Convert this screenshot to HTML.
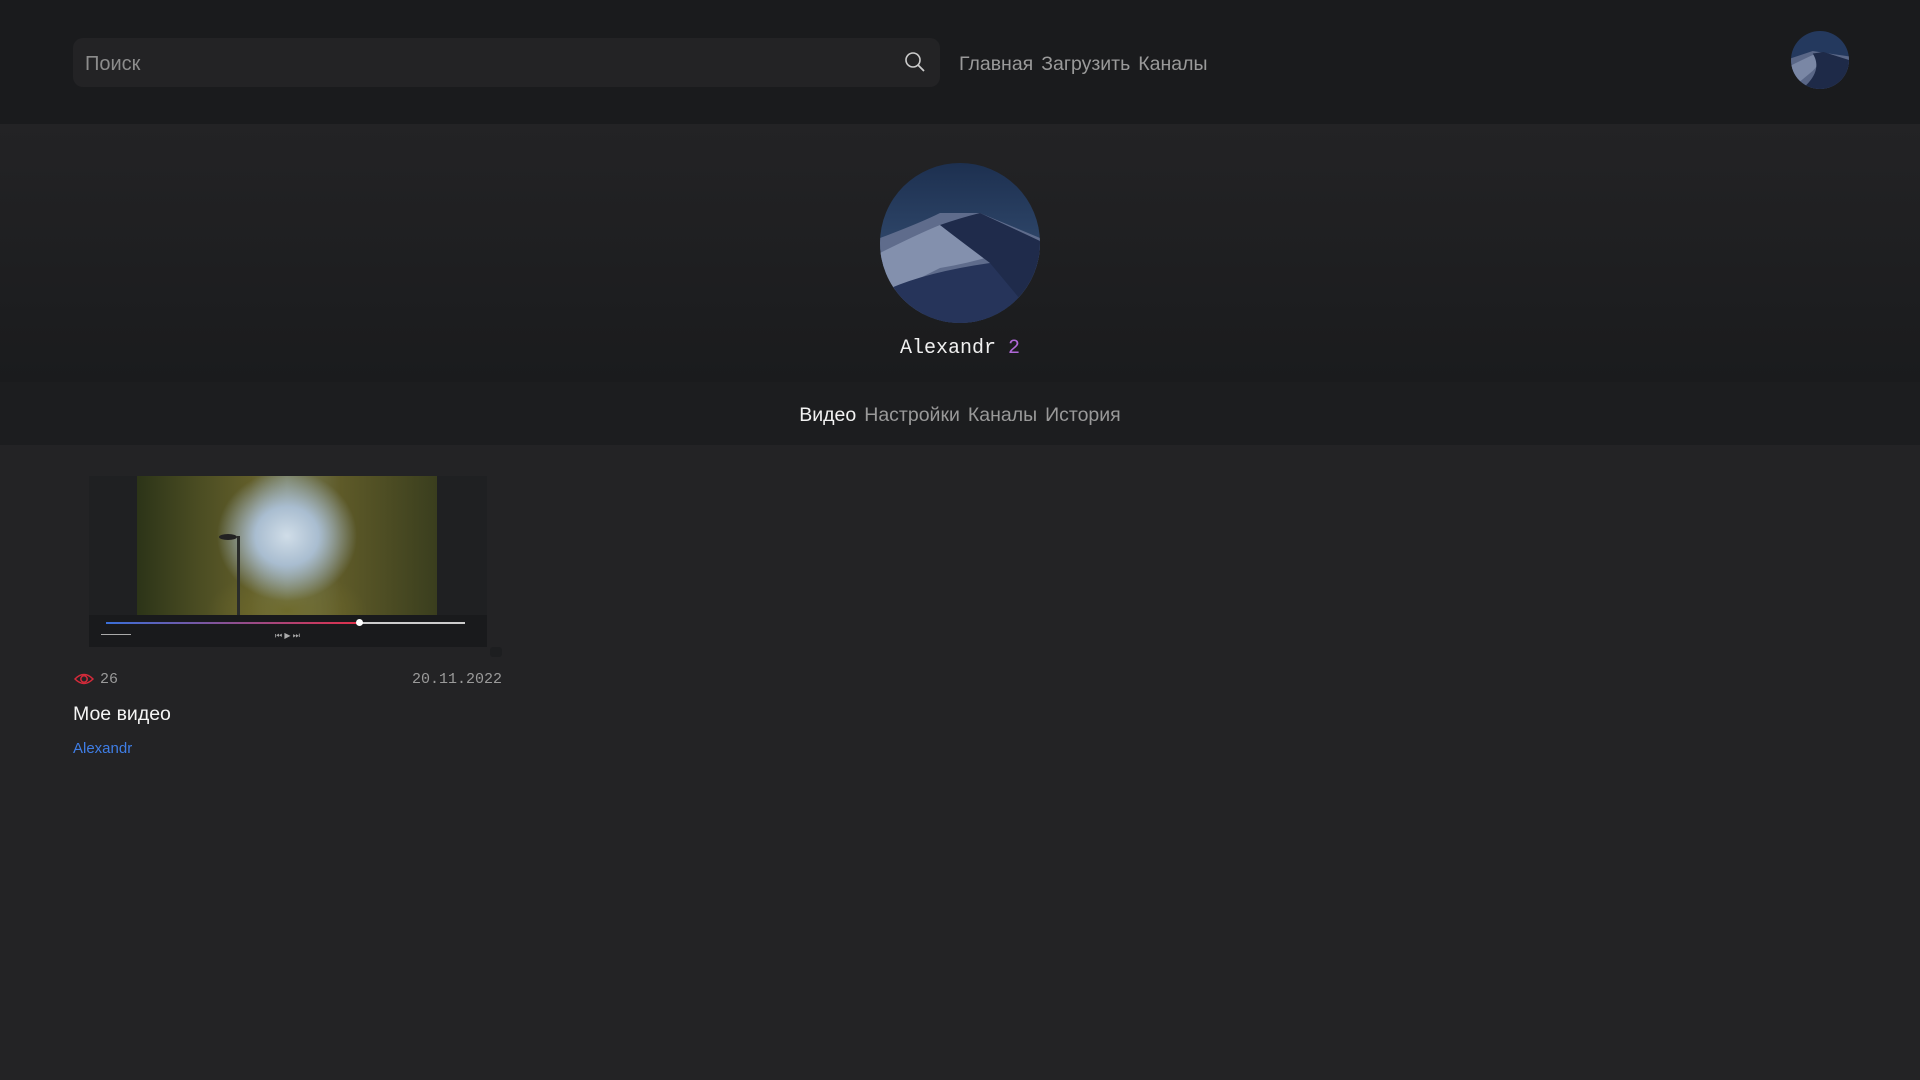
<!DOCTYPE html>
<html><head><meta charset="utf-8"><style>
*{margin:0;padding:0;box-sizing:border-box}
body{width:1920px;height:1080px;background:#232325;font-family:"Liberation Sans","DejaVu Sans",sans-serif;overflow:hidden;position:relative}
.hdr{position:absolute;left:0;top:0;width:1920px;height:124px;background:#1a1b1d}
.search{position:absolute;left:73px;top:38px;width:867px;height:49px;background:#232325;border-radius:10px}
.search span{position:absolute;left:12px;top:15px;font-size:20px;color:#8c8c8c}
.search svg{position:absolute;right:14px;top:13px}
.nav{position:absolute;left:959px;top:53px;font-size:19.5px;color:#9a9a9a}
.nav span{margin-right:8px}
.av{position:absolute;border-radius:50%;overflow:hidden}
.prof{position:absolute;left:0;top:124px;width:1920px;height:258px;background:linear-gradient(#232325,#1a1b1d)}
.name{position:absolute;left:0;width:1920px;top:337px;text-align:center;font-family:"Liberation Mono","DejaVu Sans Mono",monospace;font-size:20px;color:#f0f0f0}
.tabs{position:absolute;left:0;top:382px;width:1920px;height:63px;background:#1c1d1f;text-align:center;font-size:19.5px;color:#999;padding-top:22px}
.tabs span{margin:0 4px}
.thumb{position:absolute;left:89px;top:476px;width:398px;height:171px;background:#1f2022;overflow:hidden}
.meta{position:absolute;top:671px;font-family:"Liberation Mono","DejaVu Sans Mono",monospace;font-size:15px;color:#9a9a9a}
</style></head><body>
<div class="hdr">
 <div class="search"><span>Поиск</span>
  <svg width="22" height="22" viewBox="0 0 22 22"><circle cx="9" cy="9" r="7" fill="none" stroke="#ccc" stroke-width="1.6"/><path d="M14 14l6 6" stroke="#ccc" stroke-width="1.8"/></svg></div>
 <div class="nav"><span>Главная</span><span>Загрузить</span><span>Каналы</span></div>
 <div class="av" style="left:1791px;top:31px;width:58px;height:58px">
  <svg width="58" height="58" viewBox="0 0 160 160"><rect width="160" height="160" fill="#24395e"/><path d="M0 75 L60 55 L90 60 L160 70 L160 160 L0 160Z" fill="#5a6787"/><path d="M0 95 Q50 70 70 62 Q90 80 60 110 L0 160Z" fill="#7a87a5"/><path d="M60 62 L90 58 L160 80 L160 160 L30 160 Q90 110 60 62Z" fill="#1e2a48"/></svg></div>
</div>
<div class="prof">
 <div class="av" style="left:880px;top:39px;width:160px;height:160px">
  <svg width="160" height="160" viewBox="0 0 160 160"><defs><linearGradient id="s" x1="0" y1="0" x2="0" y2="1"><stop offset="0" stop-color="#1d3050"/><stop offset="1" stop-color="#3e5a80"/></linearGradient></defs><rect width="160" height="160" fill="url(#s)"/><path d="M0 75 Q40 60 60 50 L100 50 L160 75 L160 160 L0 160Z" fill="#5f6c8c"/><path d="M0 90 Q40 70 60 62 Q80 68 115 92 Q90 100 60 105 Q30 120 10 130 L0 130Z" fill="#8390ad"/><path d="M100 50 L160 78 L160 160 L20 160 Q80 140 110 100 Q70 70 60 62 Q80 55 100 50Z" fill="#1f2b4b"/><path d="M0 130 Q40 110 110 100 L160 160 L0 160Z" fill="#26345a"/></svg></div>
</div>
<div class="name">Alexandr <span style="color:#b068d8">2</span></div>
<div class="tabs"><span style="color:#f2f2f2">Видео</span><span>Настройки</span><span>Каналы</span><span>История</span></div>
<div class="thumb">
 <div style="position:absolute;left:48px;top:0;width:300px;height:139px;background:radial-gradient(ellipse 70px 65px at 150px 60px,#d0dde8 0,#a9bdd0 45%,transparent 100%),radial-gradient(ellipse 80px 40px at 150px 135px,#6e6a2c 0,transparent 100%),linear-gradient(90deg,#2c3418 0,#4a4c22 20%,#625e2a 38%,#7a8060 50%,#5e5a28 68%,#3a3e1e 100%)"></div>
 <div style="position:absolute;left:130px;top:58px;width:18px;height:6px;border-radius:50%;background:#222"></div>
 <div style="position:absolute;left:148px;top:60px;width:3px;height:80px;background:#2a2c2a"></div>
 <div style="position:absolute;left:0;top:139px;width:398px;height:32px;background:#191a1c"></div>
 <div style="position:absolute;left:17px;top:146px;width:254px;height:2px;background:linear-gradient(90deg,#3a6fd8,#e0304a)"></div>
 <div style="position:absolute;left:271px;top:146px;width:105px;height:2px;background:#ccc"></div>
 <div style="position:absolute;left:267px;top:143px;width:7px;height:7px;border-radius:50%;background:#fff"></div>
 <div style="position:absolute;left:12px;top:158px;width:30px;height:1px;background:#aaa"></div>
 <div style="position:absolute;left:186px;top:155px;color:#aaa;font-size:8px">⏮ ▶ ⏭</div>
</div>
<div style="position:absolute;left:490px;top:647px;width:12px;height:10px;background:#1d1e20;border-radius:3px"></div>
<svg style="position:absolute;left:74px;top:672px" width="20" height="14" viewBox="0 0 20 14"><path d="M1 7 Q10 -2 19 7 Q10 16 1 7Z" fill="none" stroke="#d42a3a" stroke-width="1.5"/><circle cx="10" cy="7" r="3.2" fill="none" stroke="#d42a3a" stroke-width="1.5"/></svg>
<div class="meta" style="left:100px">26</div>
<div class="meta" style="left:412px">20.11.2022</div>
<div style="position:absolute;left:73px;top:703px;font-size:19.5px;color:#f5f5f5">Мое видео</div>
<div style="position:absolute;left:73px;top:740px;font-size:15px;color:#3f7ee6">Alexandr</div>
</body></html>
